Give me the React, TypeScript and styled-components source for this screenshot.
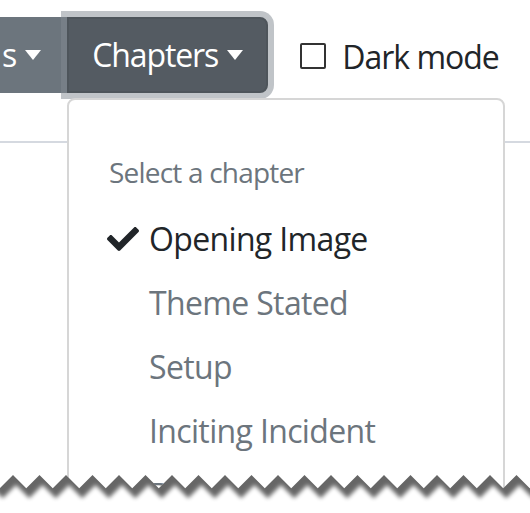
import React from 'react';
import styled, { createGlobalStyle } from 'styled-components';
import { FaCheck } from 'react-icons/fa';

const GlobalStyle = createGlobalStyle`
  html, body {
    margin: 0;
    padding: 0;
    background: #fff;
  }
  body {
    font-family: 'Open Sans', 'Noto Sans', 'Liberation Sans', sans-serif;
    color: #212529;
  }
`;

const chapters = [
  'Opening Image',
  'Theme Stated',
  'Setup',
  'Inciting Incident',
  'Debate',
  'Break Into Two',
];

const Page = styled.div`
  position: relative;
  width: 530px;
  height: 513px;
  overflow: hidden;
  background: #fff;
`;

const Navbar = styled.div`
  display: flex;
  align-items: flex-start;
  height: 124px;
  padding-top: 17px;
  border-bottom: 2px solid #d5d9e0;
`;

const BtnGroup = styled.div`
  position: relative;
  display: flex;
`;

const Button = styled.button<{ $active?: boolean; $cut?: boolean }>`
  position: relative;
  z-index: ${(p) => (p.$active ? 2 : 1)};
  display: flex;
  align-items: center;
  height: 76px;
  padding: 0 ${(p) => (p.$cut ? '24px 0 0' : '23px 0 23px')};
  border: 2px solid ${(p) => (p.$active ? '#4e555b' : '#6c757d')};
  border-radius: ${(p) => (p.$active ? '0 8px 8px 0' : '0')};
  background: ${(p) => (p.$active ? '#545b62' : '#6c757d')};
  box-shadow: ${(p) => (p.$active ? '0 0 0 6px rgba(130, 138, 145, 0.5)' : 'none')};
  color: #fff;
  font-family: inherit;
  font-size: 32px;
  line-height: 48px;
  letter-spacing: -1.1px;
  cursor: pointer;
`;

const Caret = styled.span`
  display: inline-block;
  margin-left: 9px;
  border-top: 10px solid currentColor;
  border-left: 8.5px solid transparent;
  border-right: 8.5px solid transparent;
`;

const DarkToggle = styled.label`
  display: flex;
  align-items: center;
  height: 78px;
  margin-left: 32px;
  font-size: 32px;
  letter-spacing: -1px;
  color: #212529;
`;

const CheckBox = styled.span`
  box-sizing: border-box;
  width: 26px;
  height: 26px;
  margin-right: 16px;
  border: 2px solid #333;
  border-radius: 2px;
  background: #fff;
`;

const Menu = styled.div`
  position: absolute;
  z-index: 3;
  top: 81px;
  left: 67px;
  box-sizing: border-box;
  width: 438px;
  height: 520px;
  padding: 16px 0;
  border: 2px solid #d6d6d6;
  border-radius: 8px;
  background: #fff;
`;

const MenuHeader = styled.div`
  padding: 35px 40px 14px;
  font-size: 28px;
  line-height: 42px;
  letter-spacing: -0.8px;
  color: #6c757d;
`;

const MenuItem = styled.div<{ $active?: boolean }>`
  position: relative;
  padding: 8px 40px 8px 80px;
  font-size: 32px;
  line-height: 48px;
  letter-spacing: -0.65px;
  white-space: nowrap;
  color: ${(p) => (p.$active ? '#212529' : '#6c757d')};
`;

const CheckMark = styled.span`
  position: absolute;
  left: 38px;
  top: 16px;
  display: flex;
  color: #212529;
`;

const Torn = styled.svg`
  position: absolute;
  z-index: 10;
  left: 0;
  bottom: 0;
`;

const TornEdge = () => {
  const pts: string[] = [];
  for (let k = -1; k <= 21; k++) {
    pts.push(`${13 + 26.5 * k},15`);
    pts.push(`${26.25 + 26.5 * k},28.25`);
  }
  const line = pts.join(' L ');
  const upper = `M -40 -20 L ${line} L 570 -20 Z`;
  const lower = `M -40 60 L ${line} L 570 60 Z`;
  return (
    <Torn width="530" height="53" viewBox="0 0 530 53">
      <defs>
        <clipPath id="below">
          <path d={lower} />
        </clipPath>
        <filter id="soft" x="-10%" y="-50%" width="120%" height="200%">
          <feGaussianBlur stdDeviation="2.1" />
        </filter>
      </defs>
      <path d={lower} fill="#fff" />
      <g clipPath="url(#below)">
        <path d={upper} transform="translate(3 10)" fill="#000" opacity="0.6" filter="url(#soft)" />
      </g>
    </Torn>
  );
};

export default function App() {
  return (
    <Page>
      <GlobalStyle />
      <Navbar>
        <BtnGroup>
          <Button $cut>
            s<Caret />
          </Button>
          <Button $active>
            Chapters<Caret />
          </Button>
          <Menu>
            <MenuHeader>Select a chapter</MenuHeader>
            {chapters.map((c, i) => (
              <MenuItem key={c} $active={i === 0}>
                {i === 0 && (
                  <CheckMark>
                    <FaCheck size={32} />
                  </CheckMark>
                )}
                {c}
              </MenuItem>
            ))}
          </Menu>
        </BtnGroup>
        <DarkToggle>
          <CheckBox />
          Dark mode
        </DarkToggle>
      </Navbar>
      <TornEdge />
    </Page>
  );
}
